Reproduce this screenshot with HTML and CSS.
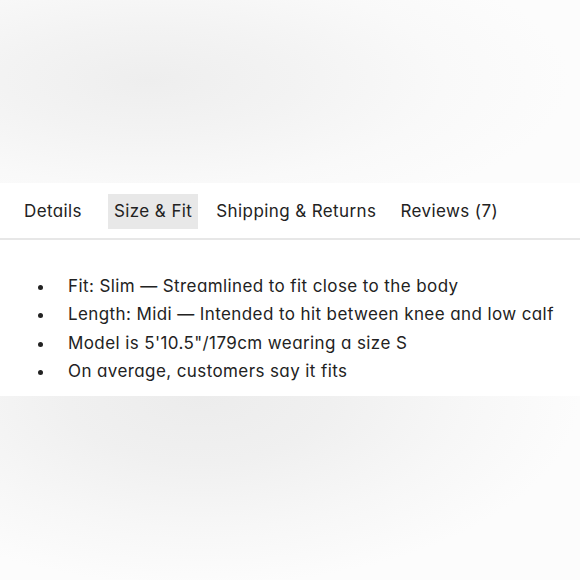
FILE: index.html
```html
<!DOCTYPE html>
<html lang="en">
<head>
<meta charset="utf-8">
<title>Size &amp; Fit</title>
<link rel="stylesheet" href="styles.css">
</head>
<body>
<div class="page">
  <div class="blur blur-top"></div>
  <section class="panel">
    <nav class="tabs">
      <span class="tab first">Details</span>
      <span class="tab active">Size &amp; Fit</span>
      <span class="tab">Shipping &amp; Returns</span>
      <span class="tab">Reviews (7)</span>
    </nav>
    <ul class="fit-list">
      <li>Fit: Slim — Streamlined to fit close to the body</li>
      <li>Length: Midi — Intended to hit between knee and low calf</li>
      <li>Model is 5'10.5"/179cm wearing a size S</li>
      <li>On average, customers say it fits</li>
    </ul>
  </section>
  <div class="blur blur-bottom"></div>
</div>
</body>
</html>
```

FILE: styles.css
```css
html, body {
  margin: 0;
  padding: 0;
  background: #fcfcfc;
}
body {
  font-family: Inter, "Open Sans", sans-serif;
  font-feature-settings: "cv11" 1;
  color: #1f1f1f;
  letter-spacing: 0.4px;
}
.page {
  width: 580px;
  height: 580px;
  display: flex;
  flex-direction: column;
  overflow: hidden;
}
.blur {
  flex: none;
}
.blur-top {
  height: 183px;
  background:
    radial-gradient(ellipse 420px 150px at 150px 80px, #eeeeee 0%, #f3f3f3 35%, #f9f9f9 70%, #fcfcfc 100%);
}
.blur-bottom {
  flex: 1;
  background:
    radial-gradient(ellipse 380px 190px at 200px 0px, #ececec 0%, #f0f0f0 35%, #f7f7f7 70%, #fcfcfc 100%);
}
.panel {
  height: 213px;
  background: #ffffff;
  flex: none;
}
.tabs {
  display: flex;
  align-items: center;
  padding: 0 0 0 18px;
  border-bottom: 2px solid #e7e7e7;
  box-sizing: border-box;
  height: 57px;
  gap: 12px;
}
.tab {
  font-size: 17px;
  line-height: 35px;
  padding: 0 6px;
  color: #222;
  margin-top: 1px;
}
.tab.first {
  margin-right: 8px;
}
.tab.active {
  background: #e8e8e8;
}
.fit-list {
  list-style: none;
  margin: 0;
  padding: 32px 0 0 68px;
}
.fit-list li {
  position: relative;
  font-size: 17px;
  line-height: 28.3px;
  color: #222;
}
.fit-list li::before {
  content: "";
  position: absolute;
  left: -30px;
  top: 13px;
  width: 5px;
  height: 5px;
  border-radius: 50%;
  background: #222;
}
```
